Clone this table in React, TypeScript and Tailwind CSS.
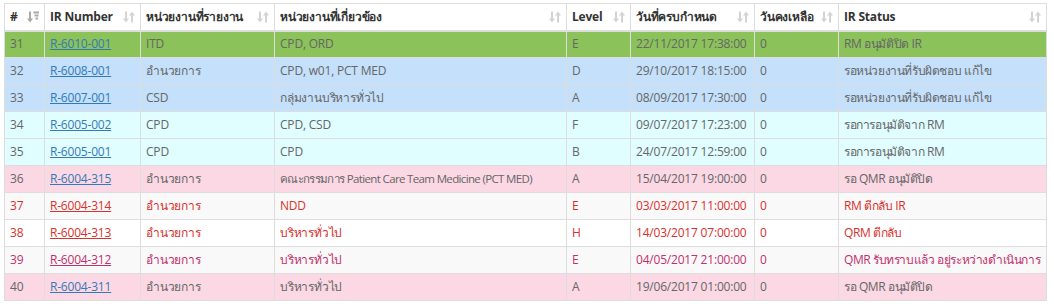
import React from "react"

type Tone = "green" | "blue" | "cyan" | "pink" | "stripe" | "white"
type Ink = "gray" | "red" | "magenta"

interface Row {
  no: number
  ir: string
  reporter: string
  related: string
  level: string
  due: string
  left: string
  status: string
  tone: Tone
  ink: Ink
}

const rows: Row[] = [
  { no: 31, ir: "R-6010-001", reporter: "ITD", related: "CPD, ORD", level: "E", due: "22/11/2017 17:38:00", left: "0", status: "RM อนุมัติปิด IR", tone: "green", ink: "gray" },
  { no: 32, ir: "R-6008-001", reporter: "อำนวยการ", related: "CPD, w01, PCT MED", level: "D", due: "29/10/2017 18:15:00", left: "0", status: "รอหน่วยงานที่รับผิดชอบ แก้ไข", tone: "blue", ink: "gray" },
  { no: 33, ir: "R-6007-001", reporter: "CSD", related: "กลุ่มงานบริหารทั่วไป", level: "A", due: "08/09/2017 17:30:00", left: "0", status: "รอหน่วยงานที่รับผิดชอบ แก้ไข", tone: "blue", ink: "gray" },
  { no: 34, ir: "R-6005-002", reporter: "CPD", related: "CPD, CSD", level: "F", due: "09/07/2017 17:23:00", left: "0", status: "รอการอนุมัติจาก RM", tone: "cyan", ink: "gray" },
  { no: 35, ir: "R-6005-001", reporter: "CPD", related: "CPD", level: "B", due: "24/07/2017 12:59:00", left: "0", status: "รอการอนุมัติจาก RM", tone: "cyan", ink: "gray" },
  { no: 36, ir: "R-6004-315", reporter: "อำนวยการ", related: "คณะกรรมการ Patient Care Team Medicine (PCT MED)", level: "A", due: "15/04/2017 19:00:00", left: "0", status: "รอ QMR อนุมัติปิด", tone: "pink", ink: "gray" },
  { no: 37, ir: "R-6004-314", reporter: "อำนวยการ", related: "NDD", level: "E", due: "03/03/2017 11:00:00", left: "0", status: "RM ตีกลับ IR", tone: "stripe", ink: "red" },
  { no: 38, ir: "R-6004-313", reporter: "อำนวยการ", related: "บริหารทั่วไป", level: "H", due: "14/03/2017 07:00:00", left: "0", status: "QRM ตีกลับ", tone: "white", ink: "red" },
  { no: 39, ir: "R-6004-312", reporter: "อำนวยการ", related: "บริหารทั่วไป", level: "E", due: "04/05/2017 21:00:00", left: "0", status: "QMR รับทราบแล้ว อยู่ระหว่างดำเนินการ", tone: "stripe", ink: "magenta" },
  { no: 40, ir: "R-6004-311", reporter: "อำนวยการ", related: "บริหารทั่วไป", level: "A", due: "19/06/2017 01:00:00", left: "0", status: "รอ QMR อนุมัติปิด", tone: "pink", ink: "gray" },
]

const toneClass: Record<Tone, string> = {
  green: "bg-[#8bc25a]",
  blue: "bg-[#c4e0fb]",
  cyan: "bg-[#e0fdff]",
  pink: "bg-[#fbd8e4]",
  stripe: "bg-[#f9f9f9]",
  white: "bg-white",
}

const inkClass: Record<Ink, string> = {
  gray: "text-[#666]",
  red: "text-[#d9302c]",
  magenta: "text-[#c2306c]",
}

const linkClass: Record<Ink, string> = {
  gray: "text-[#337ab7]",
  red: "text-[#d9302c]",
  magenta: "text-[#c2306c]",
}

const headers = [
  { label: "#", w: "w-[40px]", active: true },
  { label: "IR Number", w: "w-[96px]" },
  { label: "หน่วยงานที่รายงาน", w: "w-[134px]" },
  { label: "หน่วยงานที่เกี่ยวข้อง", w: "w-[292px]" },
  { label: "Level", w: "w-[64px]" },
  { label: "วันที่ครบกำหนด", w: "w-[124px]" },
  { label: "วันคงเหลือ", w: "w-[84px]" },
  { label: "IR Status", w: "w-[208px]" },
]

function SortIcon({ active }: { active?: boolean }) {
  if (active) {
    return (
      <svg width="12" height="12" viewBox="0 0 12 12" className="text-[#aaa]">
        <rect x="2" y="0.5" width="2" height="8" fill="currentColor" />
        <path d="M0 7.5h6L3 11.5z" fill="currentColor" />
        <rect x="6.5" y="0.5" width="5.5" height="2" fill="currentColor" />
        <rect x="7.5" y="3.5" width="4" height="2" fill="currentColor" />
        <rect x="8.5" y="6.5" width="2.5" height="2" fill="currentColor" />
      </svg>
    )
  }
  return (
    <svg width="12" height="12" viewBox="0 0 12 12" className="text-[#d4d4d4]">
      <rect x="2" y="0.5" width="2" height="8" fill="currentColor" />
      <path d="M0 7.5h6L3 11.5z" fill="currentColor" />
      <rect x="8" y="3.5" width="2" height="8" fill="currentColor" />
      <path d="M6 4.5h6L9 0.5z" fill="currentColor" />
    </svg>
  )
}

export default function App() {
  return (
    <div className="bg-white w-[1054px] h-[306px] pt-[3px] pl-[4px] font-['Open_Sans','Noto_Sans','DejaVu_Sans',sans-serif] text-[12px] tracking-[-0.2px]">
      <table className="table-fixed border-collapse w-[1042px]">
        <thead>
          <tr>
            {headers.map((h) => (
              <th
                key={h.label}
                className={`${h.w} h-[27px] border border-[#ddd] border-b-2 px-[5px] text-left font-bold text-[#333] whitespace-nowrap`}
              >
                <div className="flex items-center justify-between">
                  <span>{h.label}</span>
                  <SortIcon active={h.active} />
                </div>
              </th>
            ))}
          </tr>
        </thead>
        <tbody>
          {rows.map((r) => (
            <tr key={r.no} className={`${toneClass[r.tone]} ${inkClass[r.ink]}`}>
              <td className="h-[27px] border border-[#ddd] px-[5px] whitespace-nowrap">{r.no}</td>
              <td className="border border-[#ddd] px-[5px] whitespace-nowrap">
                <a href="#" className={`${linkClass[r.ink]} underline`}>{r.ir}</a>
              </td>
              <td className="border border-[#ddd] px-[5px] whitespace-nowrap">{r.reporter}</td>
              <td className="border border-[#ddd] px-[5px] whitespace-nowrap overflow-hidden">
                {r.related.length > 30 ? (
                  <span className="text-[11.5px] tracking-[-0.65px]">{r.related}</span>
                ) : (
                  r.related
                )}
              </td>
              <td className="border border-[#ddd] px-[5px] whitespace-nowrap">{r.level}</td>
              <td className="border border-[#ddd] px-[5px] whitespace-nowrap">{r.due}</td>
              <td className="border border-[#ddd] px-[5px] whitespace-nowrap">{r.left}</td>
              <td className="border border-[#ddd] px-[5px] whitespace-nowrap tracking-[-0.4px]">{r.status}</td>
            </tr>
          ))}
        </tbody>
      </table>
    </div>
  )
}
